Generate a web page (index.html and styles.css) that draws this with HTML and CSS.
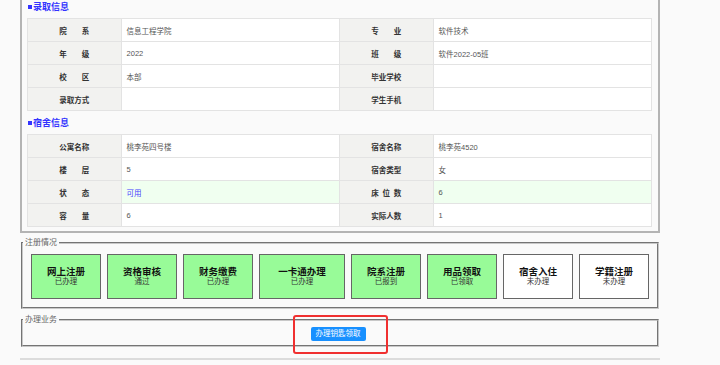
FILE: index.html
```html
<!DOCTYPE html>
<html lang="zh-CN">

<head>
    <meta charset="UTF-8">
    <meta name="viewport" content="width=device-width, initial-scale=1.0">
    <title>新生报到</title>
    <link rel="stylesheet" href="styles.css">
</head>

<body>
    <div class="page">
        <div class="panel">
            <div class="section">
                <h3 class="section-title">录取信息</h3>
                <table class="info-table">
                    <colgroup>
                        <col class="col-label">
                        <col class="col-value">
                        <col class="col-label">
                        <col class="col-value">
                    </colgroup>
                    <tr>
                        <th>院　　系</th>
                        <td>信息工程学院</td>
                        <th>专　　业</th>
                        <td>软件技术</td>
                    </tr>
                    <tr>
                        <th>年　　级</th>
                        <td>2022</td>
                        <th>班　　级</th>
                        <td>软件2022-05班</td>
                    </tr>
                    <tr>
                        <th>校　　区</th>
                        <td>本部</td>
                        <th>毕业学校</th>
                        <td></td>
                    </tr>
                    <tr>
                        <th>录取方式</th>
                        <td></td>
                        <th>学生手机</th>
                        <td></td>
                    </tr>
                </table>
            </div>

            <div class="section">
                <h3 class="section-title">宿舍信息</h3>
                <table class="info-table">
                    <colgroup>
                        <col class="col-label">
                        <col class="col-value">
                        <col class="col-label">
                        <col class="col-value">
                    </colgroup>
                    <tr>
                        <th>公寓名称</th>
                        <td>桃李苑四号楼</td>
                        <th>宿舍名称</th>
                        <td>桃李苑4520</td>
                    </tr>
                    <tr>
                        <th>楼　　层</th>
                        <td>5</td>
                        <th>宿舍类型</th>
                        <td>女</td>
                    </tr>
                    <tr class="row-hl">
                        <th>状　　态</th>
                        <td><span class="status-ok">可用</span></td>
                        <th>床&ensp;位&ensp;数</th>
                        <td>6</td>
                    </tr>
                    <tr>
                        <th>容　　量</th>
                        <td>6</td>
                        <th>实际人数</th>
                        <td>1</td>
                    </tr>
                </table>
            </div>
        </div>

        <fieldset class="box box-steps">
            <legend>注册情况</legend>
            <div class="steps">
                <div class="step done">
                    <div class="step-name">网上注册</div>
                    <div class="step-state">已办理</div>
                </div>
                <div class="step done">
                    <div class="step-name">资格审核</div>
                    <div class="step-state">通过</div>
                </div>
                <div class="step done">
                    <div class="step-name">财务缴费</div>
                    <div class="step-state">已办理</div>
                </div>
                <div class="step step-wide done">
                    <div class="step-name">一卡通办理</div>
                    <div class="step-state">已办理</div>
                </div>
                <div class="step done">
                    <div class="step-name">院系注册</div>
                    <div class="step-state">已报到</div>
                </div>
                <div class="step done">
                    <div class="step-name">用品领取</div>
                    <div class="step-state">已领取</div>
                </div>
                <div class="step">
                    <div class="step-name">宿舍入住</div>
                    <div class="step-state">未办理</div>
                </div>
                <div class="step">
                    <div class="step-name">学籍注册</div>
                    <div class="step-state">未办理</div>
                </div>
            </div>
        </fieldset>

        <fieldset class="box">
            <legend>办理业务</legend>
            <div class="actions">
                <div class="action-wrap">
                    <button class="btn-primary">办理钥匙领取</button>
                    <span class="mark"></span>
                </div>
            </div>
        </fieldset>

        <div class="next-panel"></div>
    </div>
</body>

</html>
```

FILE: styles.css
```css
* {
    box-sizing: border-box;
}

body {
    margin: 0;
    padding: 0;
    background-color: #fafafa;
    font-family: "Liberation Sans", "Noto Sans CJK SC", sans-serif;
    color: #333;
}

.page {
    width: 640px;
    margin-left: 20px;
}

.panel {
    border: 2px solid #b4b4b4;
    border-top: none;
    padding: 0 6px 4px 5px;
}

.section + .section {
    margin-top: 5px;
}

.section-title {
    margin: 0 0 4px 1px;
    font-size: 9px;
    line-height: 14px;
    font-weight: bold;
    color: #3333ff;
}

.section-title::before {
    content: "";
    display: inline-block;
    width: 4px;
    height: 4px;
    margin-right: 1px;
    vertical-align: 1px;
    background-color: #3333ff;
}

.info-table {
    width: 100%;
    border-collapse: collapse;
    table-layout: fixed;
    font-size: 7.5px;
}

.col-label {
    width: 15%;
}

.col-value {
    width: 35%;
}

.info-table th,
.info-table td {
    height: 23px;
    border: 1px solid #e3e3e3;
    padding: 0 5px;
}

.info-table th {
    background-color: #f2f2f0;
    color: #333;
    font-weight: bold;
    text-align: center;
}

.info-table td {
    background-color: #fff;
    color: #555;
    text-align: left;
}

.info-table .row-hl td {
    background-color: #f0fff0;
}

.status-ok {
    color: #4444ff;
}

.box {
    margin: 6px 1px 0;
    padding: 0;
    border: 2px groove #c8c8c8;
    min-width: 0;
}

.box-steps {
    margin-top: 5px;
}

.box legend {
    margin-left: 0;
    padding: 0 2px;
    font-size: 8px;
    line-height: 10px;
    color: #666;
}

.steps {
    display: flex;
    gap: 6px;
    padding: 6px 8px 8px;
}

.step {
    width: 70px;
    height: 45px;
    border: 1px solid #666;
    background-color: #fff;
    display: flex;
    flex-direction: column;
    justify-content: center;
    align-items: center;
}

.step-wide {
    width: 86px;
}

.step.done {
    background-color: #98fb98;
}

.step-name {
    font-size: 9.5px;
    line-height: 11px;
    font-weight: bold;
    color: #111;
    white-space: nowrap;
}

.step-state {
    font-size: 7.5px;
    line-height: 10px;
    color: #333;
}

.actions {
    display: flex;
    justify-content: center;
    padding: 2px 4px 4px 0;
}

.action-wrap {
    position: relative;
}

.btn-primary {
    display: block;
    height: 14px;
    padding: 0 5px;
    border: none;
    border-radius: 2px;
    background-color: #1890ff;
    color: #fff;
    font-family: "Liberation Sans", "Noto Sans CJK SC", sans-serif;
    font-size: 7.5px;
    line-height: 14px;
}

.mark {
    position: absolute;
    left: -18px;
    top: -12px;
    width: 95px;
    height: 39px;
    border: 2px solid #f03030;
    border-radius: 3px;
}

.next-panel {
    margin-top: 11px;
    border-top: 2px solid #dcdcdc;
}
```
